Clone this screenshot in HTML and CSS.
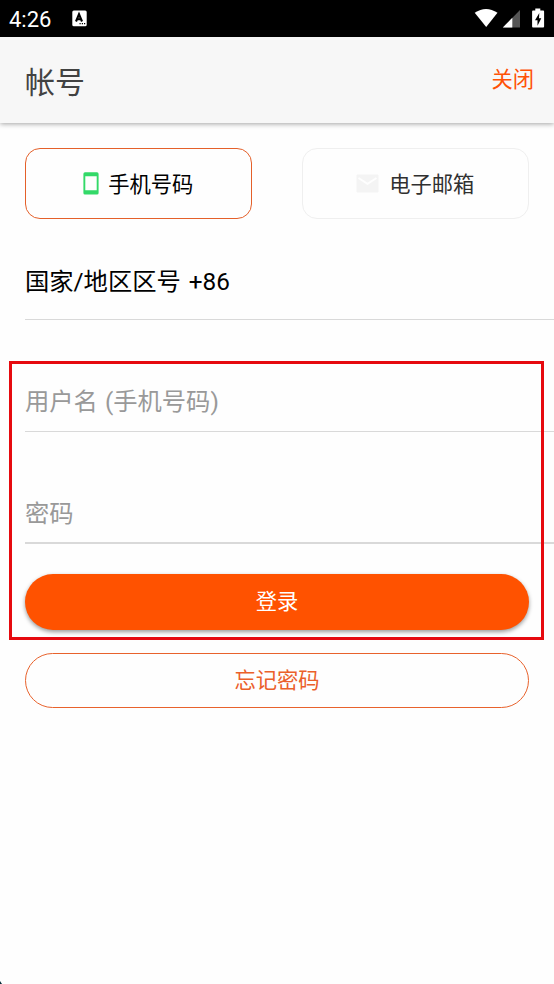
FILE: index.html
```html
<!DOCTYPE html>
<html lang="zh-CN">
<head>
<meta charset="utf-8">
<title>帐号</title>
<link rel="stylesheet" href="styles.css">
</head>
<body>
<div class="screen">
  <div class="status">
    <span class="clock">4:26</span>
    <svg class="input-icon" width="15" height="17" viewBox="0 0 15 17"><rect x=".3" y=".5" width="14.4" height="15.8" rx="1.5" fill="#fff"/><path d="M4 11.500 7 4.300 10 11.500M5.200 9.200h3.700" fill="none" stroke="#000" stroke-width="2.100"/><path d="M7.500 13.700h1.200M9.800 13.700H11M12 13.700h1.200" stroke="#000" stroke-width="1.200"/></svg>
    <svg class="signals" width="72" height="22" viewBox="0 0 72 22"><path d="M.7 4.800Q12 -2.800 23.500 4.800L12.200 19Z" fill="#fff"/><path d="M28.800 19.500 46 2V19.500Z" fill="#555"/><path d="M28.800 19.500 38.300 9.800V19.500Z" fill="#fff"/><path d="M61.300 .5h5v2h2.900q.9 0 .9.900v15.200q0 .9-.9.900H59q-.9 0-.9-.9V3.400q0-.9.900-.9h2.300Z" fill="#fff"/><path d="M65.300 5 61 12.300h2.500V17.800L67.300 10.200h-2.300Z" fill="#000"/></svg>
  </div>
  <header class="header"><h1>帐号</h1><a class="close">关闭</a></header>
  <main>
    <div class="tabs">
      <div class="tab active">
        <svg class="phone" width="16" height="23" viewBox="0 0 16 23"><path d="M2 .3h12q1.600 0 1.600 1.600v19q0 1.600-1.600 1.600H2Q.4 22.500.4 20.900v-19Q.4.3 2 .3ZM2.300 4.300v13.900h11.400V4.300Z" fill="#33d968" fill-rule="evenodd"/></svg>
        <span>手机号码</span>
      </div>
      <div class="tab">
        <svg class="mail" width="23" height="19" viewBox="0 0 23 19"><rect x=".5" y=".5" width="22" height="18" rx="1" fill="#f4f4f4"/><path d="m2.500 4 9 5.800 9-5.800" fill="none" stroke="#fefefe" stroke-width="2"/></svg>
        <span>电子邮箱</span>
      </div>
    </div>
    <div class="field region">国家/地区区号 +86</div>
    <div class="field placeholder">用户名 (手机号码)</div>
    <div class="field placeholder password">密码</div>
    <div class="actions">
      <div class="button login">登录</div>
      <div class="button forgot">忘记密码</div>
    </div>
  </main>
  <div class="highlight"></div>
  <div class="corner"></div>
</div>
</body>
</html>
```
FILE: styles.css
```css
* { box-sizing: border-box; }
body {
  margin: 0;
  background: #fefefe;
  font-family: Roboto, "Noto Sans CJK SC", sans-serif;
}
.screen {
  position: relative;
  height: 984px;
  overflow: hidden;
}
.status {
  display: flex;
  align-items: center;
  height: 37px;
  padding: 0 8px 0 9px;
  background: #000;
  color: #fff;
}
.clock {
  width: 63px;
  font-size: 22px;
  line-height: 37px;
  padding-top: 1px;
}
.signals { margin-left: auto; }
.header {
  display: flex;
  justify-content: space-between;
  height: 86px;
  padding: 0 20px 0 25px;
  background: #f7f7f7;
  box-shadow: 0 1px 5px rgba(0, 0, 0, .36);
}
h1 {
  margin: 0;
  font-size: 30px;
  font-weight: 400;
  line-height: 91px;
  color: #424242;
}
.close {
  font-size: 21.3px;
  line-height: 85px;
  color: #ff5205;
}
.tabs {
  display: flex;
  justify-content: space-between;
  padding: 25px 25px 0 24.5px;
}
.tab {
  display: flex;
  align-items: center;
  justify-content: center;
  width: 227.5px;
  height: 71px;
  border: 1.5px solid #efefef;
  border-radius: 15px;
  font-size: 21.3px;
  color: #303030;
}
.tab span { margin-top: -2px; }
.tab.active {
  border-color: #e4602a;
  color: #000;
}
.phone { margin-right: 9px; }
.mail { margin-right: 10px; }
.field {
  height: 112px;
  margin-left: 25px;
  border-bottom: 1px solid #d9d9d9;
  font-size: 24.3px;
  line-height: 36px;
  padding-top: 64px;
  word-spacing: 1px;
}
.region {
  height: 101px;
  padding-top: 45px;
  color: #000;
  word-spacing: 2px;
}
.placeholder { color: #999; }
.password { border-bottom-width: 2px; }
.actions {
  display: grid;
  gap: 23px;
  padding: 30px 25px 0;
}
.button {
  height: 56px;
  border-radius: 28px;
  font-size: 21.3px;
  line-height: 56px;
  text-align: center;
}
.login {
  background: #ff5200;
  color: #fff;
  box-shadow: 0 2px 4px rgba(0, 0, 0, .4);
}
.forgot {
  height: 55px;
  border: 1.5px solid #e8622c;
  line-height: 54px;
  color: #eb602a;
}
.highlight {
  position: absolute;
  left: 9px;
  top: 361px;
  width: 535px;
  height: 279px;
  border: 3px solid #e60a0f;
}
.corner {
  position: absolute;
  left: 0;
  bottom: 0;
  width: 2px;
  height: 3px;
  background: #042c38;
  clip-path: polygon(0 0, 100% 100%, 0 100%);
}
```
